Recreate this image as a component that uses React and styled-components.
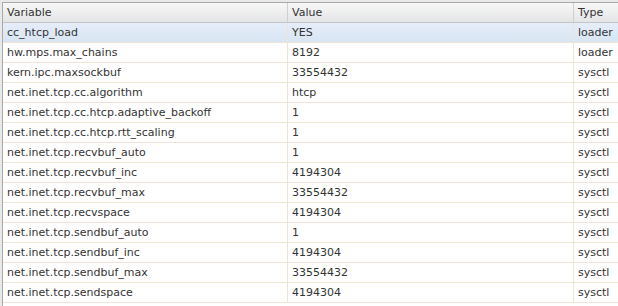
import React from "react";
import styled, { createGlobalStyle } from "styled-components";

const Global = createGlobalStyle`
  html, body { margin: 0; padding: 0; background: #fff; overflow: hidden; }
  body { width: 618px; height: 306px; }
`;

const Frame = styled.div`
  padding: 2px 0 0 2px;
  background: #e9e9e9;
  width: 618px;
  height: 306px;
  box-sizing: border-box;
  overflow: hidden;
`;

const Grid = styled.div`
  border-left: 1px solid #a9a9a9;
  border-top: 1px solid #a9a9a9;
  background: #fff;
  height: 100%;
  font-family: "DejaVu Sans", Verdana, sans-serif;
  font-size: 11px;
  color: #333;
`;

const Row = styled.div`
  display: grid;
  grid-template-columns: 285px 286px 1fr;
  height: 19px;
  border-bottom: 1px solid ${(p) => (p.$head ? "#c4c4c4" : "#ede4d5")};
  background: ${(p) =>
    p.$head
      ? "linear-gradient(#f7f7f7, #e4e5e7)"
      : p.$selected
      ? "linear-gradient(#e5edf8, #d9e5f4)"
      : "#fff"};
`;

const Cell = styled.div`
  display: flex;
  align-items: center;
  padding-left: 4px;
  white-space: nowrap;
  overflow: hidden;
  min-width: 0;
  border-right: 1px solid ${(p) => (p.$head ? "#cfcfcf" : "#ede4d5")};
  &:last-child { border-right: none; }
`;

const rows = [
  ["cc_htcp_load", "YES", "loader"],
  ["hw.mps.max_chains", "8192", "loader"],
  ["kern.ipc.maxsockbuf", "33554432", "sysctl"],
  ["net.inet.tcp.cc.algorithm", "htcp", "sysctl"],
  ["net.inet.tcp.cc.htcp.adaptive_backoff", "1", "sysctl"],
  ["net.inet.tcp.cc.htcp.rtt_scaling", "1", "sysctl"],
  ["net.inet.tcp.recvbuf_auto", "1", "sysctl"],
  ["net.inet.tcp.recvbuf_inc", "4194304", "sysctl"],
  ["net.inet.tcp.recvbuf_max", "33554432", "sysctl"],
  ["net.inet.tcp.recvspace", "4194304", "sysctl"],
  ["net.inet.tcp.sendbuf_auto", "1", "sysctl"],
  ["net.inet.tcp.sendbuf_inc", "4194304", "sysctl"],
  ["net.inet.tcp.sendbuf_max", "33554432", "sysctl"],
  ["net.inet.tcp.sendspace", "4194304", "sysctl"],
];

export default function App() {
  return (
    <>
      <Global />
      <Frame>
        <Grid>
          <Row $head>
            <Cell $head>Variable</Cell>
            <Cell $head>Value</Cell>
            <Cell $head>Type</Cell>
          </Row>
          {rows.map((r, i) => (
            <Row key={r[0]} $selected={i === 0}>
              <Cell>{r[0]}</Cell>
              <Cell>{r[1]}</Cell>
              <Cell>{r[2]}</Cell>
            </Row>
          ))}
        </Grid>
      </Frame>
    </>
  );
}
